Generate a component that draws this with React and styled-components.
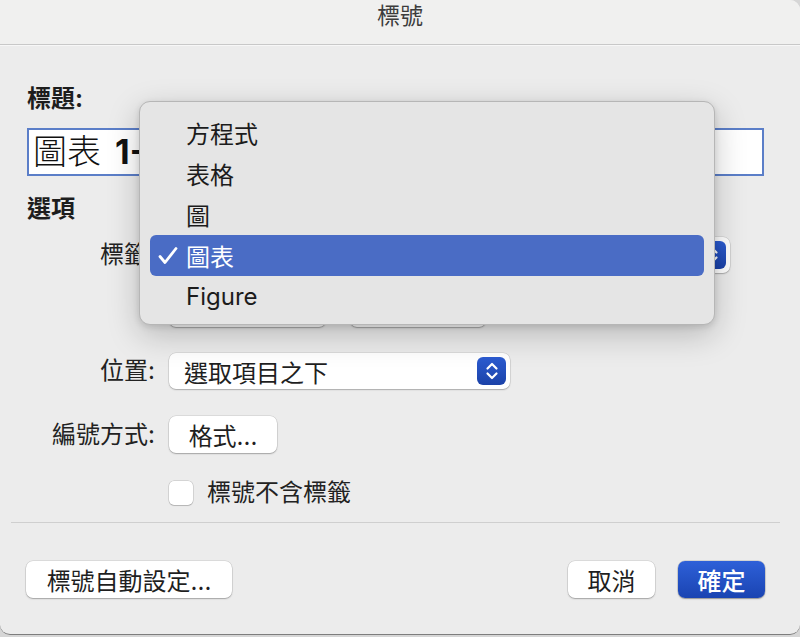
import styled, { createGlobalStyle } from 'styled-components';

const GlobalStyle = createGlobalStyle`
  html, body {
    margin: 0;
    padding: 0;
    background: #d6d6d6;
  }
  body {
    font-family: Inter, "Noto Sans CJK TC", sans-serif;
    color: #1f1f1f;
  }
`;

const Window = styled.div`
  position: relative;
  width: 800px;
  height: 635px;
  box-sizing: border-box;
  display: flex;
  flex-direction: column;
  background: #ececec;
  border-bottom: 1px solid #7d7d7d;
  border-radius: 0 10px 10px 10px;
  overflow: hidden;
`;

const TitleBar = styled.div`
  height: 45px;
  flex: none;
  display: flex;
  justify-content: center;
  padding-top: 2px;
  box-sizing: border-box;
  background: #f0f0ef;
  border-bottom: 1px solid #c8c8c8;
  box-shadow: 0 1px 0 #f7f7f7;
  font-size: 23px;
  line-height: 28px;
  color: #3c3c3c;
`;

const Content = styled.div`
  display: flex;
  flex-direction: column;
  padding: 0 36px 0 27px;
`;

const SectionLabel = styled.div`
  margin-top: ${(p) => p.$top}px;
  font-size: 24px;
  line-height: 30px;
  font-weight: 700;
  color: #1d1d1d;
`;

const TextField = styled.div`
  margin-top: 14px;
  height: 48px;
  box-sizing: border-box;
  border: 2px solid #5b7ec8;
  background: #fff;
  padding-left: 4px;
  font-size: 34px;
  line-height: 44px;
  white-space: nowrap;
  overflow: hidden;
  font-weight: 300;
  color: #111;

  b {
    font-weight: 700;
    margin-left: 14px;
  }
`;

const FieldRow = styled.div`
  display: grid;
  grid-template-columns: 128px auto;
  column-gap: 14px;
  align-items: center;
  margin-top: ${(p) => p.$top}px;
`;

const FieldLabel = styled.div`
  text-align: right;
  font-size: 24px;
  line-height: 30px;
  color: #222;
  white-space: nowrap;
`;

const Controls = styled.div`
  display: flex;
  align-items: center;
  gap: ${(p) => p.$gap || 0}px;
`;

const Select = styled.div`
  position: relative;
  width: ${(p) => p.$width}px;
  height: 36px;
  box-sizing: border-box;
  display: flex;
  align-items: center;
  padding-left: 15px;
  background: #fff;
  border-radius: 7px;
  box-shadow: 0 0 0 0.5px rgba(0, 0, 0, 0.14), 0 1px 1.5px rgba(0, 0, 0, 0.22);
  font-size: 24px;
  color: #1f1f1f;
`;

const Stepper = styled.span`
  position: absolute;
  right: 4px;
  top: 4px;
  width: 29px;
  height: 28px;
  border-radius: 6px;
  background: linear-gradient(#2c5cd2, #1b42a8);
  display: flex;
  align-items: center;
  justify-content: center;
`;

const PushButton = styled.div`
  width: ${(p) => p.$width}px;
  height: 37px;
  box-sizing: border-box;
  display: flex;
  align-items: center;
  justify-content: center;
  background: #fff;
  border-radius: 7px;
  box-shadow: 0 0 0 0.5px rgba(0, 0, 0, 0.14), 0 1px 1.5px rgba(0, 0, 0, 0.25);
  font-size: 24px;
  color: #1f1f1f;
  white-space: nowrap;
`;

const DefaultButton = styled(PushButton)`
  background: linear-gradient(#2e60d8, #1a44b2);
  color: #fff;
  font-weight: 500;
  box-shadow: 0 0 0 0.5px rgba(0, 0, 0, 0.2), 0 1px 1.5px rgba(0, 0, 0, 0.3);
`;

const CheckRow = styled.label`
  display: flex;
  align-items: center;
  gap: 14px;
  font-size: 24px;
  line-height: 30px;
  color: #222;
`;

const CheckBox = styled.span`
  width: 24px;
  height: 24px;
  box-sizing: border-box;
  border-radius: 5px;
  background: #fff;
  box-shadow: 0 0 0 0.5px rgba(0, 0, 0, 0.2), 0 1px 1px rgba(0, 0, 0, 0.15);
`;

const Separator = styled.div`
  margin: 14px 20px 0 11px;
  height: 1px;
  background: #cfcfcf;
`;

const Footer = styled.div`
  display: flex;
  justify-content: space-between;
  align-items: center;
  margin-top: 38px;
  padding: 0 35px 0 26px;
`;

/* open pop-up list of the label select, drawn over the form */
const Menu = styled.div`
  position: absolute;
  left: 139px;
  top: 101px;
  width: 576px;
  height: 224px;
  box-sizing: border-box;
  padding: 10px 10px 9px;
  background: #e5e5e5;
  border: 1px solid #b6b6b6;
  border-radius: 11px;
  box-shadow: 0 10px 32px rgba(0, 0, 0, 0.22), 0 2px 6px rgba(0, 0, 0, 0.12);
`;

const MenuItem = styled.div`
  position: relative;
  height: 41px;
  display: flex;
  align-items: center;
  padding-left: 36px;
  border-radius: 6px;
  font-size: 24px;
  color: ${(p) => (p.$checked ? '#fff' : '#1c1c1c')};
  background: ${(p) => (p.$checked ? '#4a6cc5' : 'transparent')};
`;

const Check = styled.svg`
  position: absolute;
  left: 7px;
  top: 10px;
`;

function StepperIcon() {
  return (
    <Stepper>
      <svg width="14" height="20" viewBox="0 0 14 20" fill="none" stroke="#fff" strokeWidth="2.2" strokeLinecap="round" strokeLinejoin="round">
        <polyline points="2.5,7.5 7,3 11.5,7.5" />
        <polyline points="2.5,12.5 7,17 11.5,12.5" />
      </svg>
    </Stepper>
  );
}

const labelTypes = ['方程式', '表格', '圖', '圖表', 'Figure'];

export default function App() {
  return (
    <>
      <GlobalStyle />
      <Window>
        <TitleBar>標號</TitleBar>
        <Content>
          <SectionLabel $top={39}>標題:</SectionLabel>
          <TextField>
            圖表<b>1-</b>
          </TextField>
          <SectionLabel $top={18}>選項</SectionLabel>

          {/* select and buttons below sit under the open list */}
          <FieldRow $top={13}>
            <FieldLabel>標籤:</FieldLabel>
            <Select $width={561}>
              <StepperIcon />
            </Select>
          </FieldRow>

          <FieldRow $top={17}>
            <span />
            <Controls $gap={24}>
              <PushButton $width={157} />
              <PushButton $width={136} />
            </Controls>
          </FieldRow>

          <FieldRow $top={26}>
            <FieldLabel>位置:</FieldLabel>
            <Select $width={341}>
              選取項目之下
              <StepperIcon />
            </Select>
          </FieldRow>

          <FieldRow $top={27}>
            <FieldLabel>編號方式:</FieldLabel>
            <Controls>
              <PushButton $width={108}>格式...</PushButton>
            </Controls>
          </FieldRow>

          <FieldRow $top={25}>
            <span />
            <CheckRow>
              <CheckBox />
              標號不含標籤
            </CheckRow>
          </FieldRow>
        </Content>

        <Separator />

        <Footer>
          <PushButton $width={206}>標號自動設定...</PushButton>
          <Controls $gap={23}>
            <PushButton $width={87}>取消</PushButton>
            <DefaultButton $width={87}>確定</DefaultButton>
          </Controls>
        </Footer>

        <Menu>
          {labelTypes.map((name) => (
            <MenuItem key={name} $checked={name === '圖表'}>
              {name === '圖表' && (
                <Check width="22" height="22" viewBox="0 0 22 22" fill="none" stroke="#fff" strokeWidth="2.8" strokeLinecap="round" strokeLinejoin="round">
                  <polyline points="3,11.5 8,17.5 19,3.5" />
                </Check>
              )}
              {name}
            </MenuItem>
          ))}
        </Menu>
      </Window>
    </>
  );
}
